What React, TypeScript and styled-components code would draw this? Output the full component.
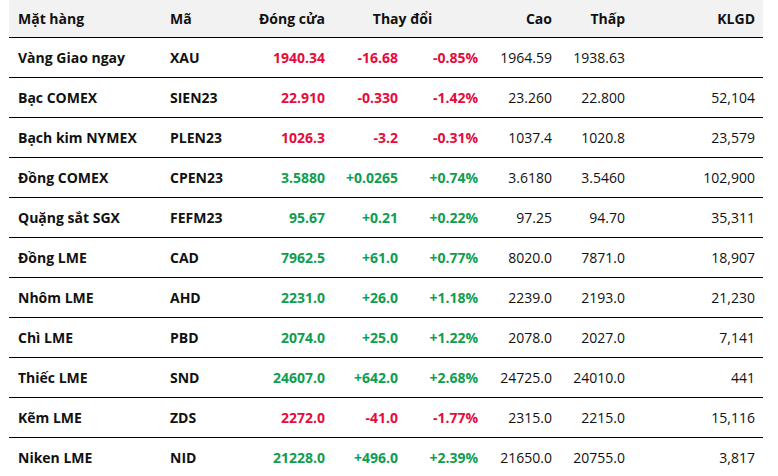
import React from "react";
import styled, { createGlobalStyle } from "styled-components";

const Global = createGlobalStyle`
  html, body { margin: 0; padding: 0; background: #fff; }
  body { font-family: "Open Sans", "Noto Sans", sans-serif; color: #111; }
`;

const COLS = "152px 90px 82px 73px 80px 74px 73px 130px";

const Page = styled.div`
  padding: 0 15px 0 9px;
  width: 754px;
`;

const Table = styled.div`
  display: flex;
  flex-direction: column;
  font-size: 14px;
`;

const HeadRow = styled.div`
  display: grid;
  grid-template-columns: ${COLS};
  height: 37px;
  background: #f2f2f2;
  border-bottom: 1px solid #000;
`;

const Row = styled.div`
  display: grid;
  grid-template-columns: ${COLS};
  height: 39px;
  border-bottom: 1px solid #000;
`;

type CellProps = { $align?: "left" | "right" | "center"; $tone?: "up" | "down"; $bold?: boolean; $span?: number; $shift?: number };

const HeadCell = styled.div<CellProps>`
  display: flex;
  align-items: center;
  justify-content: ${(p) => (p.$align === "right" ? "flex-end" : p.$align === "center" ? "center" : "flex-start")};
  padding: 0 ${(p) => 8 + (p.$shift || 0)}px 1px 9px;
  font-weight: 700;
  color: #111;
  white-space: nowrap;
  grid-column: span ${(p) => p.$span || 1};
`;

const Cell = styled.div<CellProps>`
  display: flex;
  align-items: center;
  justify-content: ${(p) => (p.$align === "right" ? "flex-end" : "flex-start")};
  padding: 0 8px 0 9px;
  font-weight: ${(p) => (p.$bold ? 700 : 400)};
  color: ${(p) => (p.$tone === "up" ? "#0f9e50" : p.$tone === "down" ? "#e60b3c" : "#111")};
  white-space: nowrap;
`;

type Item = [string, string, string, string, string, string, string, string];

const rows: Item[] = [
  ["Vàng Giao ngay", "XAU", "1940.34", "-16.68", "-0.85%", "1964.59", "1938.63", ""],
  ["Bạc COMEX", "SIEN23", "22.910", "-0.330", "-1.42%", "23.260", "22.800", "52,104"],
  ["Bạch kim NYMEX", "PLEN23", "1026.3", "-3.2", "-0.31%", "1037.4", "1020.8", "23,579"],
  ["Đồng COMEX", "CPEN23", "3.5880", "+0.0265", "+0.74%", "3.6180", "3.5460", "102,900"],
  ["Quặng sắt SGX", "FEFM23", "95.67", "+0.21", "+0.22%", "97.25", "94.70", "35,311"],
  ["Đồng LME", "CAD", "7962.5", "+61.0", "+0.77%", "8020.0", "7871.0", "18,907"],
  ["Nhôm LME", "AHD", "2231.0", "+26.0", "+1.18%", "2239.0", "2193.0", "21,230"],
  ["Chì LME", "PBD", "2074.0", "+25.0", "+1.22%", "2078.0", "2027.0", "7,141"],
  ["Thiếc LME", "SND", "24607.0", "+642.0", "+2.68%", "24725.0", "24010.0", "441"],
  ["Kẽm LME", "ZDS", "2272.0", "-41.0", "-1.77%", "2315.0", "2215.0", "15,116"],
  ["Niken LME", "NID", "21228.0", "+496.0", "+2.39%", "21650.0", "20755.0", "3,817"],
];

export default function App() {
  return (
    <Page>
      <Global />
      <Table>
        <HeadRow>
          <HeadCell>Mặt hàng</HeadCell>
          <HeadCell>Mã</HeadCell>
          <HeadCell $align="right">Đóng cửa</HeadCell>
          <HeadCell $align="center" $span={2} $shift={15}>Thay đổi</HeadCell>
          <HeadCell $align="right">Cao</HeadCell>
          <HeadCell $align="right">Thấp</HeadCell>
          <HeadCell $align="right">KLGD</HeadCell>
        </HeadRow>
        {rows.map((r) => {
          const tone = r[3].startsWith("-") ? "down" : "up";
          return (
            <Row key={r[1]}>
              <Cell $bold>{r[0]}</Cell>
              <Cell $bold>{r[1]}</Cell>
              <Cell $bold $align="right" $tone={tone}>{r[2]}</Cell>
              <Cell $bold $align="right" $tone={tone}>{r[3]}</Cell>
              <Cell $bold $align="right" $tone={tone}>{r[4]}</Cell>
              <Cell $align="right">{r[5]}</Cell>
              <Cell $align="right">{r[6]}</Cell>
              <Cell $align="right">{r[7]}</Cell>
            </Row>
          );
        })}
      </Table>
    </Page>
  );
}
